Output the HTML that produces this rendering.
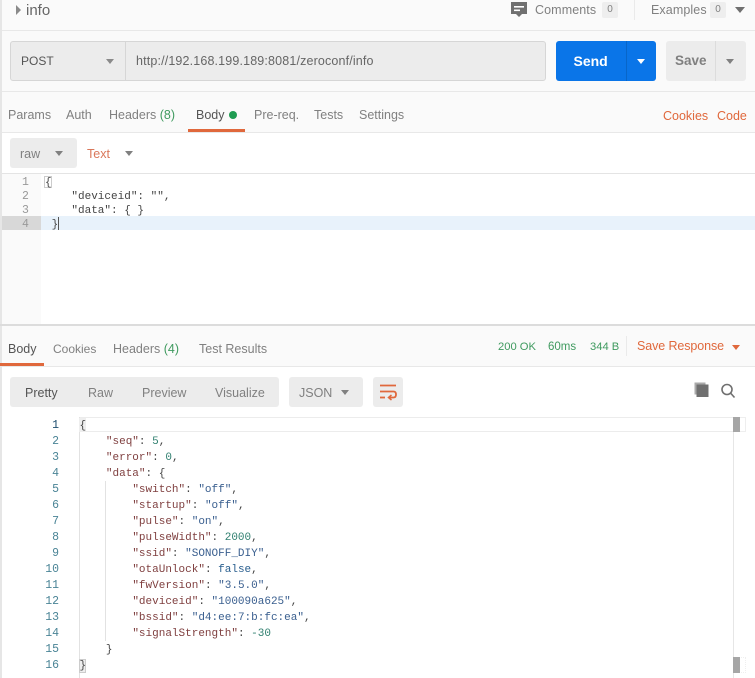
<!DOCTYPE html>
<html><head><meta charset="utf-8"><style>
html,body{margin:0;padding:0;background:#fafafa}
#p{position:relative;width:755px;height:678px;overflow:hidden;background:#fafafa;font-family:"Liberation Sans",sans-serif;font-size:12.5px;color:#808080}
#p div,#p span.a,#p svg{position:absolute}
.t{white-space:nowrap;line-height:16px}
.m{font-family:"Liberation Mono",monospace;white-space:pre;line-height:16px;font-size:11px;color:#444}
.k{color:#7f3f3f}.s{color:#3a5f8f}.n{color:#2f7f6f}.b{color:#2a5f8f}
.ln{font-family:"Liberation Mono",monospace;font-size:11.5px;line-height:16px;text-align:right;color:#4a8496;width:30px;left:29px}
.ol{color:#e0683c}.gr{color:#3f9a5f}
</style></head><body><div id="p">
<div style="left:2px;top:133px;width:753px;height:41px;background:#fff"></div>
<div style="left:2px;top:367px;width:753px;height:51px;background:#fff"></div>
<div style="left:0;top:0;width:2px;height:678px;background:#e6e6e6"></div>

<svg style="left:15px;top:5px" width="7" height="10"><path d="M1 0L6 5L1 10Z" fill="#8a8a8a"/></svg>
<div class="t" style="left:26px;top:3px;font-size:15px;color:#666">info</div>
<svg style="left:511px;top:2px" width="16" height="16"><path d="M0 0H16V12H11L8 15L5 12H0Z" fill="#707070"/><rect x="3" y="4" width="10" height="1.600" fill="#fff"/><rect x="3" y="7.500" width="6" height="1.600" fill="#fff"/></svg>
<div class="t" style="left:535px;top:2px;letter-spacing:.1px;color:#808080">Comments</div>
<div style="left:602px;top:2px;width:16px;height:16px;background:#eee;border-radius:2px;text-align:center;font-size:10px;line-height:16px;color:#808080">0</div>
<div style="left:634px;top:0;width:1px;height:20px;background:#eaeaea"></div>
<div class="t" style="left:651px;top:2px;letter-spacing:.1px;color:#808080">Examples</div>
<div style="left:710px;top:2px;width:16px;height:16px;background:#eee;border-radius:2px;text-align:center;font-size:10px;line-height:16px;color:#808080">0</div>
<svg style="left:735px;top:7px" width="10" height="7"><path d="M0 0H10L5 6Z" fill="#707070"/></svg>
<div style="left:2px;top:30px;width:753px;height:1px;background:#e8e8e8"></div>

<div style="left:10px;top:41px;width:536px;height:40px;box-sizing:border-box;background:#ececec;border:1px solid #d6d6d6;border-radius:3px"></div>
<div style="left:125px;top:42px;width:1px;height:38px;background:#d6d6d6"></div>
<div class="t" style="left:21px;top:53px;color:#555;font-size:12px">POST</div>
<svg style="left:106px;top:59px" width="8" height="6"><path d="M0 0H8L4 5Z" fill="#8a8a8a"/></svg>
<div class="t" style="left:136px;top:53px;color:#666;font-size:12.5px;letter-spacing:.15px">http://192.168.199.189:8081/zeroconf/info</div>

<div style="left:556px;top:41px;width:100px;height:40px;background:#0a75e8;border-radius:3px"></div>
<div style="left:626px;top:41px;width:1px;height:40px;background:#0866c9"></div>
<div class="t" style="left:573.500px;top:53px;color:#fff;font-size:14px;font-weight:bold">Send</div>
<svg style="left:637px;top:59px" width="8" height="6"><path d="M0 0H8L4 5Z" fill="#fff"/></svg>
<div style="left:666px;top:41px;width:80px;height:40px;background:#ececec;border-radius:3px"></div>
<div style="left:715px;top:41px;width:1px;height:40px;background:#dcdcdc"></div>
<div class="t" style="left:675px;top:53px;color:#808080;font-size:13.500px;font-weight:bold">Save</div>
<svg style="left:726px;top:59px" width="8" height="6"><path d="M0 0H8L4 5Z" fill="#808080"/></svg>
<div style="left:2px;top:91px;width:753px;height:1px;background:#e8e8e8"></div>

<div class="t" style="left:8px;top:107px">Params</div>
<div class="t" style="left:66px;top:107px">Auth</div>
<div class="t" style="left:109px;top:107px">Headers <span class="gr">(8)</span></div>
<div class="t" style="left:196px;top:107px;color:#555">Body</div>
<div style="left:229px;top:111px;width:8px;height:8px;border-radius:4px;background:#1f9c52"></div>
<div class="t" style="left:254px;top:107px">Pre-req.</div>
<div class="t" style="left:314px;top:107px">Tests</div>
<div class="t" style="left:359px;top:107px">Settings</div>
<div class="t ol" style="left:663px;top:108px">Cookies</div>
<div class="t ol" style="left:717px;top:108px">Code</div>
<div style="left:188px;top:129px;width:57px;height:3px;background:#e0683c"></div>
<div style="left:2px;top:132px;width:753px;height:1px;background:#e8e8e8"></div>

<div style="left:10px;top:138px;width:67px;height:30px;background:#ececec;border-radius:3px"></div>
<div class="t" style="left:20px;top:146px">raw</div>
<svg style="left:55px;top:151px" width="8" height="6"><path d="M0 0H8L4 5Z" fill="#808080"/></svg>
<div class="t" style="left:87px;top:146px;color:#d9775a">Text</div>
<svg style="left:125px;top:151px" width="8" height="6"><path d="M0 0H8L4 5Z" fill="#808080"/></svg>

<div style="left:2px;top:173px;width:753px;height:151px;background:#fff;border-top:1px solid #e4e4e4;box-sizing:border-box"></div>
<div style="left:2px;top:174px;width:39px;height:150px;background:#fafafa"></div>
<div style="left:2px;top:216px;width:39px;height:14px;background:#d8d8d8"></div>
<div style="left:41px;top:216px;width:714px;height:14px;background:#e8f2fb"></div>
<div class="m" style="left:22px;top:176px;color:#999;line-height:14px;font-size:11.500px">1
2
3
4</div>
<div style="left:44px;top:176px;width:8px;height:12px;border:1px solid #ccc;box-sizing:border-box"></div>
<div class="m" style="left:45px;top:176px;line-height:14px;font-size:11px">{
    "deviceid": "",
    "data": { }
 }</div>
<div style="left:58px;top:217px;width:1px;height:13px;background:#555"></div>

<div style="left:0;top:324px;width:755px;height:2px;background:#dcdcdc"></div>

<div class="t" style="left:8px;top:341px;color:#555">Body</div>
<div class="t" style="left:53px;top:341px;font-size:12px">Cookies</div>
<div class="t" style="left:113px;top:341px">Headers <span class="gr">(4)</span></div>
<div class="t" style="left:199px;top:341px">Test Results</div>
<div style="left:0;top:363px;width:44px;height:3px;background:#e0683c"></div>
<div style="left:2px;top:366px;width:753px;height:1px;background:#e8e8e8"></div>
<div class="t" style="left:498px;top:339px;color:#3f9a5f;font-size:11.200px">200 OK</div>
<div class="t" style="left:548px;top:339px;color:#3f9a5f;font-size:11.500px">60ms</div>
<div class="t" style="left:590px;top:339px;color:#3f9a5f;font-size:11.200px">344 B</div>
<div style="left:626px;top:336px;width:1px;height:20px;background:#eaeaea"></div>
<div class="t ol" style="left:637px;top:338px;font-size:12.500px;letter-spacing:-.1px">Save Response</div>
<svg style="left:732px;top:345px" width="8" height="6"><path d="M0 0H8L4 5Z" fill="#e0683c"/></svg>

<div style="left:10px;top:377px;width:269px;height:30px;background:#ececec;border-radius:3px"></div>
<div class="t" style="left:25px;top:385px;color:#555">Pretty</div>
<div class="t" style="left:88px;top:385px">Raw</div>
<div class="t" style="left:142px;top:385px">Preview</div>
<div class="t" style="left:215px;top:385px">Visualize</div>
<div style="left:289px;top:377px;width:74px;height:30px;background:#ececec;border-radius:3px"></div>
<div class="t" style="left:299px;top:385px">JSON</div>
<svg style="left:341px;top:390px" width="8" height="6"><path d="M0 0H8L4 5Z" fill="#808080"/></svg>
<div style="left:373px;top:377px;width:30px;height:30px;background:#ececec;border-radius:3px"></div>
<svg style="left:380px;top:384px" width="18" height="18" fill="none" stroke="#e0683c" stroke-width="1.800"><path d="M0 1.500H16M0 7.500H13.500Q16 7.500 16 10.500Q16 13.500 13.500 13.500H9"/><path d="M0 13.500H5"/><path d="M11.500 11L8.500 13.500L11.500 16" stroke-width="1.500"/></svg>
<svg style="left:694px;top:382px" width="16" height="16"><rect x="0.500" y="0.500" width="11" height="12" fill="#aaa"/><rect x="2.500" y="2.500" width="12" height="12.500" fill="#707070"/></svg>
<svg style="left:720px;top:383px" width="16" height="16" fill="none" stroke="#707070" stroke-width="1.600"><circle cx="7" cy="6.500" r="5"/><path d="M10.500 10L14.500 14.500"/></svg>

<div style="left:2px;top:417px;width:753px;height:261px;background:#fff"></div>
<div style="left:79px;top:417px;width:654px;height:15px;border-top:1px solid #ececec;border-bottom:1px solid #ececec;box-sizing:border-box;background:#fff"></div>
<div style="left:79px;top:417px;width:1px;height:261px;background:#e2e2e2"></div>
<div style="left:105px;top:481px;width:1px;height:160px;background:#e2e2e2"></div>
<div style="left:733px;top:418px;width:1px;height:260px;background:#e6e6e6"></div>
<div style="left:733px;top:417px;width:13px;height:15px;box-sizing:border-box;border:1px solid #eee"></div>
<div style="left:733px;top:657px;width:13px;height:16px;box-sizing:border-box;border:1px dotted #efefef"></div>
<div style="left:733px;top:417px;width:7px;height:15px;background:#a6a6a6"></div>
<div style="left:733px;top:657px;width:7px;height:16px;background:#a6a6a6"></div>
<div style="left:79px;top:418px;width:7px;height:14px;background:#eee"></div>
<div style="left:79px;top:659px;width:7px;height:14px;background:#eee;border:1px solid #ccc;box-sizing:border-box"></div>

<div class="ln" style="top:418px"><span style="color:#1f4f6f">1</span><br>2<br>3<br>4<br>5<br>6<br>7<br>8<br>9<br>10<br>11<br>12<br>13<br>14<br>15<br>16</div>
<div class="m" style="left:79.500px;top:418px">{
    <span class="k">"seq"</span>: <span class="n">5</span>,
    <span class="k">"error"</span>: <span class="n">0</span>,
    <span class="k">"data"</span>: {
        <span class="k">"switch"</span>: <span class="s">"off"</span>,
        <span class="k">"startup"</span>: <span class="s">"off"</span>,
        <span class="k">"pulse"</span>: <span class="s">"on"</span>,
        <span class="k">"pulseWidth"</span>: <span class="n">2000</span>,
        <span class="k">"ssid"</span>: <span class="s">"SONOFF_DIY"</span>,
        <span class="k">"otaUnlock"</span>: <span class="b">false</span>,
        <span class="k">"fwVersion"</span>: <span class="s">"3.5.0"</span>,
        <span class="k">"deviceid"</span>: <span class="s">"100090a625"</span>,
        <span class="k">"bssid"</span>: <span class="s">"d4:ee:7:b:fc:ea"</span>,
        <span class="k">"signalStrength"</span>: <span class="n">-30</span>
    }
}</div>
</div></body></html>
